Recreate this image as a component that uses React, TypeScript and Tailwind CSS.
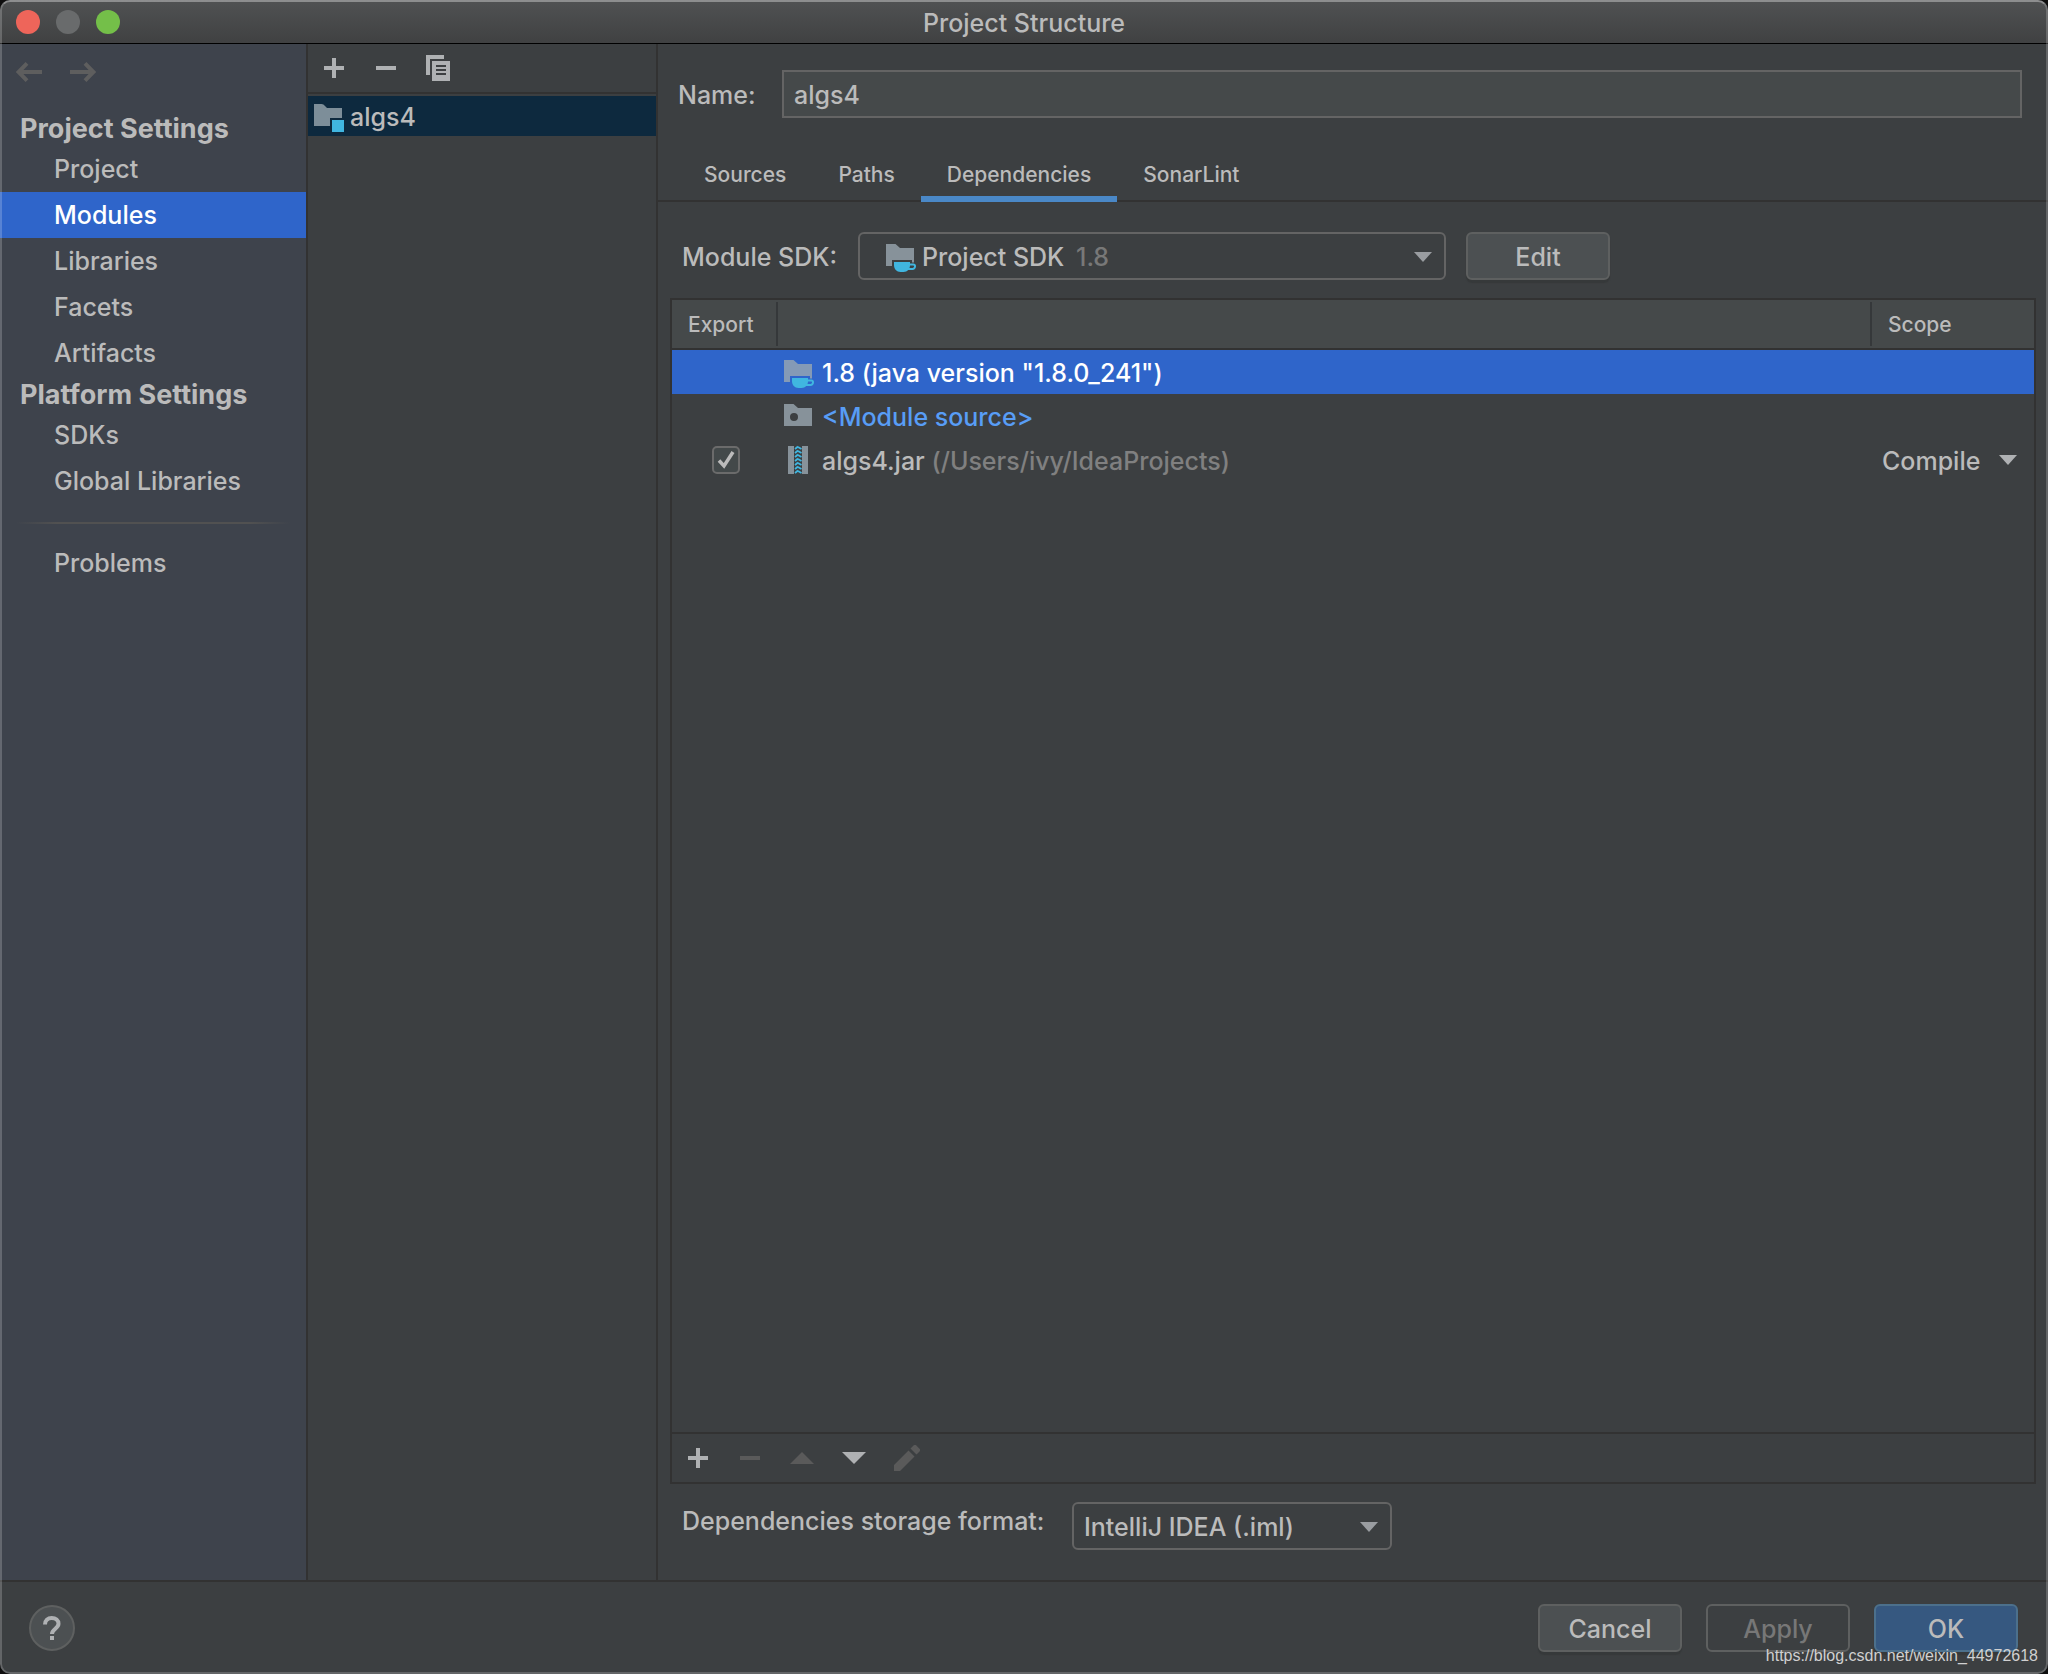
import React from "react";

type IconProps = { className?: string };

function BackIcon() {
  return (
    <svg width="26" height="20" viewBox="0 0 26 20" fill="none" stroke="#5E5E5E" strokeWidth="4">
      <path d="M26 10H3M11 1.4 2.6 10l8.4 8.6" />
    </svg>
  );
}

function ForwardIcon() {
  return (
    <svg width="26" height="20" viewBox="0 0 26 20" fill="none" stroke="#5E5E5E" strokeWidth="4">
      <path d="M0 10h23M15 1.4 23.4 10 15 18.600" />
    </svg>
  );
}

function PlusIcon() {
  return (
    <svg width="20" height="20" viewBox="0 0 20 20" fill="#AFB1B3">
      <path d="M8 0h4v8h8v4h-8v8H8v-8H0V8h8z" />
    </svg>
  );
}

function MinusIcon({ className = "fill-[#AFB1B3]" }: IconProps) {
  return (
    <svg width="20" height="20" viewBox="0 0 20 20" className={className}>
      <path d="M0 8h20v4H0z" />
    </svg>
  );
}

function CopyIcon() {
  return (
    <svg width="24" height="26" viewBox="0 0 24 26">
      <path fill="#AFB1B3" d="M0 0h18v4H4v16H0z" />
      <path fill="#AFB1B3" fillRule="evenodd" d="M6 6h18v20H6zM10 10h10v2H10zM10 14h10v2H10zM10 18h10v2H10z" />
    </svg>
  );
}

function ModuleIcon() {
  return (
    <svg width="32" height="32" viewBox="0 0 32 32">
      <path fill="#9AA7B0" fillOpacity=".8" d="M2 4h7.500c1.500 0 2.500.7 3.500 2l2 2h15v10H18v8H2z" />
      <path fill="#40B6E0" d="M20 20h12v12H20z" />
    </svg>
  );
}

function JdkIcon({ className }: IconProps) {
  return (
    <svg width="32" height="32" viewBox="0 0 32 32" className={className}>
      <path fill="#9AA7B0" fillOpacity=".8" d="M2 4h9.500l4.500 4h14v14.500h-2V20H8v6H2z" />
      <path fill="#40B6E0" d="M10 22h16v3c0 4-2.500 7-6.500 7h-3C12.500 32 10 29 10 25z" />
      <path fill="none" stroke="#40B6E0" strokeWidth="2" d="M25 24.500h4.500a1.500 1.500 0 0 1 1.500 1.500v.5a2.500 2.500 0 0 1-2.500 2.500H23" />
    </svg>
  );
}

function SourceIcon() {
  return (
    <svg width="32" height="32" viewBox="0 0 32 32">
      <path
        fill="#9AA7B0"
        fillOpacity=".8"
        fillRule="evenodd"
        d="M2 4h9.500l4.500 4h14v18H2zM12 13a4 4 0 1 0 0 8 4 4 0 0 0 0-8z"
      />
    </svg>
  );
}

function JarIcon() {
  return (
    <svg width="32" height="32" viewBox="0 0 32 32">
      <path fill="#9AA7B0" fillOpacity=".8" d="M6 2h6v28H6zM20 2h6v28h-6z" />
      <path
        stroke="#40B6E0"
        strokeWidth="1.800"
        fill="none"
        d="M13 5l3-2.500M13 9l3-2.500M13 13l3-2.500M13 17l3-2.500M13 21l3-2.500M13 25l3-2.500M13 29l3-2.500M16 3l3.500 2M16 7l3.500 2M16 11l3.500 2M16 15l3.500 2M16 19l3.500 2M16 23l3.500 2M16 27l3.500 2"
      />
    </svg>
  );
}

function DownArrow({ className }: IconProps) {
  return (
    <svg width="18" height="10" viewBox="0 0 18 10" className={className}>
      <path d="M0 0h18L9 10z" />
    </svg>
  );
}

function MoveIcon({ up = false }: { up?: boolean }) {
  return (
    <svg width="24" height="12" viewBox="0 0 24 12">
      {up ? <path fill="#5A5A5A" d="M0 12h24L12 0z" /> : <path fill="#AFB1B3" d="M0 0h24L12 12z" />}
    </svg>
  );
}

function PencilIcon() {
  return (
    <svg width="26" height="26" viewBox="0 0 26 26" fill="#5A5A5A">
      <path d="M0 20 14.500 5.500l6 6L6 26H0zM16.500 3.500 19.300.7a2.300 2.300 0 0 1 3.300 0l2.700 2.700a2.300 2.300 0 0 1 0 3.300l-2.800 2.800z" />
    </svg>
  );
}

function QuestionIcon() {
  return (
    <svg width="18" height="24" viewBox="0 0 18 24">
      <path
        d="M2 8.500C2 4.500 4.800 2 8.700 2c4 0 6.800 2.400 6.800 5.800 0 4.700-6.500 5.200-6.500 10.200"
        fill="none"
        stroke="#AFB1B3"
        strokeWidth="4"
      />
      <path d="M7 20h4v4H7z" fill="#AFB1B3" />
    </svg>
  );
}

function NavHeading({ children }: { children: React.ReactNode }) {
  return <h2 className="flex h-9 items-center pt-0.5 pl-5 text-[27px] font-bold">{children}</h2>;
}

function NavItem({ label, active = false }: { label: string; active?: boolean }) {
  return (
    <button
      type="button"
      aria-current={active ? "page" : undefined}
      className={
        active
          ? "flex h-[46px] w-full items-center bg-[#2F65CA] pl-[54px] text-white"
          : "flex h-[46px] w-full items-center pl-[54px]"
      }
    >
      {label}
    </button>
  );
}

function Sidebar() {
  return (
    <nav className="w-[308px] shrink-0 border-r-2 border-[#323232] bg-[#3E434C]">
      <div className="flex h-[66px] items-start gap-7 pt-[18px] pl-4">
        <button type="button" aria-label="Back" disabled>
          <BackIcon />
        </button>
        <button type="button" aria-label="Forward" disabled>
          <ForwardIcon />
        </button>
      </div>
      <NavHeading>Project Settings</NavHeading>
      <NavItem label="Project" />
      <NavItem label="Modules" active />
      <NavItem label="Libraries" />
      <NavItem label="Facets" />
      <NavItem label="Artifacts" />
      <NavHeading>Platform Settings</NavHeading>
      <NavItem label="SDKs" />
      <NavItem label="Global Libraries" />
      <div className="mx-4 mt-[18px] mb-4 h-0.5 bg-[linear-gradient(to_right,transparent,#515151_15%,#515151_85%,transparent)]" />
      <NavItem label="Problems" />
    </nav>
  );
}

function ModuleList() {
  return (
    <section className="w-[350px] shrink-0 border-r-2 border-[#323232]">
      <div className="flex h-[50px] items-center gap-8 border-b-2 border-[#323232] px-4">
        <button type="button" aria-label="Add module">
          <PlusIcon />
        </button>
        <button type="button" aria-label="Remove module">
          <MinusIcon />
        </button>
        <button type="button" aria-label="Copy module" className="-ml-0.5">
          <CopyIcon />
        </button>
      </div>
      <button type="button" className="mt-0.5 flex h-10 w-full items-center gap-1.5 bg-[#0D293E] pl-1">
        <ModuleIcon />
        <span className="pt-0.5">algs4</span>
      </button>
    </section>
  );
}

function Tab({ label, active = false }: { label: string; active?: boolean }) {
  return (
    <button
      type="button"
      role="tab"
      aria-selected={active}
      className={
        active
          ? "h-[52px] border-b-[6px] border-[#4A88C7] px-[26px] pt-1"
          : "h-[52px] border-b-[6px] border-transparent px-[26px] pt-1"
      }
    >
      {label}
    </button>
  );
}

function DependencyTable() {
  return (
    <div className="mx-3 mt-[18px] flex grow flex-col border-2 border-[#323232]">
      <div className="grow">
        <table className="w-full table-fixed border-separate border-spacing-0">
          <colgroup>
            <col className="w-[106px]" />
            <col />
            <col className="w-[164px]" />
          </colgroup>
          <thead>
            <tr className="h-[50px] bg-[#45494A] text-left text-[21px]">
              <th className="border-b-2 border-[#323232] p-0 font-medium">
                <div className="flex h-11 items-center border-r-2 border-[#35383A] pt-0.5 pl-4">Export</div>
              </th>
              <th className="border-b-2 border-[#323232] p-0" aria-label="Dependency" />
              <th className="border-b-2 border-[#323232] p-0 font-medium">
                <div className="flex h-11 items-center border-l-2 border-[#35383A] pt-0.5 pl-4">Scope</div>
              </th>
            </tr>
          </thead>
          <tbody>
            <tr className="h-11 bg-[#2F65CA] text-white">
              <td className="p-0" />
              <td className="p-0">
                <div className="flex items-center gap-2 pl-1">
                  <JdkIcon />
                  <span className="pt-0.5">1.8 (java version "1.8.0_241")</span>
                </div>
              </td>
              <td className="p-0" />
            </tr>
            <tr className="h-11 text-[#589DF6]">
              <td className="p-0" />
              <td className="p-0">
                <div className="flex items-center gap-2 pl-1">
                  <SourceIcon />
                  <span className="pt-0.5">&lt;Module source&gt;</span>
                </div>
              </td>
              <td className="p-0" />
            </tr>
            <tr className="h-11">
              <td className="p-0">
                <label className="relative ml-10 block size-7">
                  <input
                    type="checkbox"
                    defaultChecked
                    aria-label="Export algs4.jar"
                    className="peer block size-7 appearance-none rounded-[5px] border-2 border-[#6B6B6B] bg-[#43494A]"
                  />
                  <svg
                    viewBox="0 0 28 28"
                    className="pointer-events-none absolute inset-0 hidden size-7 peer-checked:block"
                  >
                    <path d="M7 14.500 12 20 21 6" fill="none" stroke="#BBBBBB" strokeWidth="3.500" />
                  </svg>
                </label>
              </td>
              <td className="p-0">
                <div className="flex items-center gap-2 pl-1">
                  <JarIcon />
                  <span className="pt-0.5">
                    algs4.jar <span className="text-[#808080]">(/Users/ivy/IdeaProjects)</span>
                  </span>
                </div>
              </td>
              <td className="p-0">
                <div className="relative">
                  <select
                    aria-label="Scope of algs4.jar"
                    defaultValue="Compile"
                    className="block w-full appearance-none bg-transparent pt-0.5 pl-3"
                  >
                    <option>Compile</option>
                  </select>
                  <DownArrow className="pointer-events-none absolute top-1/2 right-[17px] -translate-y-1/2 fill-[#AFB1B3]" />
                </div>
              </td>
            </tr>
          </tbody>
        </table>
      </div>
      <div className="flex h-[50px] items-center gap-8 border-t-2 border-[#323232] pl-4">
        <button type="button" aria-label="Add dependency">
          <PlusIcon />
        </button>
        <button type="button" aria-label="Remove dependency" disabled>
          <MinusIcon className="fill-[#5A5A5A]" />
        </button>
        <button type="button" aria-label="Move up" disabled className="-ml-0.5">
          <MoveIcon up />
        </button>
        <button type="button" aria-label="Move down" className="-ml-1">
          <MoveIcon />
        </button>
        <button type="button" aria-label="Edit dependency" disabled className="-ml-1">
          <PencilIcon />
        </button>
      </div>
    </div>
  );
}

function Editor() {
  return (
    <main className="flex min-w-0 grow flex-col">
      <div className="flex items-center pt-[26px] pr-[26px] pl-5">
        <label htmlFor="module-name" className="w-[104px] pt-0.5">
          Name:
        </label>
        <input
          id="module-name"
          type="text"
          defaultValue="algs4"
          className="h-12 min-w-0 grow border-2 border-[#646464] bg-[#45494A] px-2.5 pt-0.5"
        />
      </div>
      <div role="tablist" className="mt-8 flex h-[52px] border-b-2 border-[#323232] pl-5 text-[21px]">
        <Tab label="Sources" />
        <Tab label="Paths" />
        <Tab label="Dependencies" active />
        <Tab label="SonarLint" />
      </div>
      <div className="mt-[30px] flex items-center pl-6">
        <label htmlFor="module-sdk" className="w-44 pt-0.5">
          Module SDK:
        </label>
        <div className="relative w-[588px]">
          <select
            id="module-sdk"
            defaultValue="Project SDK"
            className="h-12 w-full appearance-none rounded-md border-2 border-[#646464] bg-[#3C3F41] pt-0.5 pl-[62px]"
          >
            <option>Project SDK</option>
          </select>
          <JdkIcon className="pointer-events-none absolute top-2 left-[26px]" />
          <span className="pointer-events-none absolute top-0 left-[218px] pt-0.5 leading-[46px] text-[#787878]">1.8</span>
          <DownArrow className="pointer-events-none absolute top-5 right-3.5 fill-[#9A9DA1]" />
        </div>
        <button
          type="button"
          className="ml-5 h-12 w-36 rounded-md border-2 border-[#5E6060] bg-[#4C5052] pt-0.5 shadow-[0_3px_1px_#36393A]"
        >
          Edit
        </button>
      </div>
      <DependencyTable />
      <div className="mt-[18px] mb-[30px] flex items-start pl-6">
        <label htmlFor="storage-format" className="w-[390px] leading-[38px]">
          Dependencies storage format:
        </label>
        <div className="relative w-80">
          <select
            id="storage-format"
            defaultValue="IntelliJ IDEA (.iml)"
            className="h-12 w-full appearance-none rounded-md border-2 border-[#646464] bg-[#3C3F41] pt-0.5 pl-2.5"
          >
            <option>IntelliJ IDEA (.iml)</option>
          </select>
          <DownArrow className="pointer-events-none absolute top-5 right-3.5 fill-[#9A9DA1]" />
        </div>
      </div>
    </main>
  );
}

export default function App() {
  return (
    <div className="min-h-screen bg-[#0E0E0E] font-['Inter','Liberation_Sans',sans-serif] text-[25px] leading-[30px] font-medium text-[#BBBBBB]">
      <div className="relative flex min-h-screen flex-col overflow-hidden rounded-[10px] bg-[#3C3F41]">
        <header className="grid h-11 grid-cols-[1fr_auto_1fr] items-center border-b border-black bg-linear-to-b from-[#505253] to-[#404142] px-4">
          <div className="flex gap-4">
            <button type="button" aria-label="Close" className="size-6 rounded-full bg-[#EE655A]" />
            <button type="button" aria-label="Minimize" disabled className="size-6 rounded-full bg-[#696B6C]" />
            <button type="button" aria-label="Zoom" className="size-6 rounded-full bg-[#74BF49]" />
          </div>
          <h1 className="pt-0.5">Project Structure</h1>
        </header>
        <div className="flex grow">
          <Sidebar />
          <ModuleList />
          <Editor />
        </div>
        <footer className="flex items-center gap-6 border-t-2 border-[#323232] py-[22px] pr-[30px] pl-[29px]">
          <button
            type="button"
            aria-label="Help"
            className="mr-auto flex size-[46px] items-center justify-center rounded-full border-2 border-[#5E6060] bg-[#4C5052]"
          >
            <QuestionIcon />
          </button>
          <button
            type="button"
            className="h-12 w-36 rounded-md border-2 border-[#5E6060] bg-[#4C5052] pt-0.5 shadow-[0_3px_1px_#36393A]"
          >
            Cancel
          </button>
          <button type="button" disabled className="h-12 w-36 rounded-md border-2 border-[#5E6060] pt-0.5 text-[#777777]">
            Apply
          </button>
          <button
            type="button"
            className="h-12 w-36 rounded-md border-2 border-[#4C708C] bg-[#365880] pt-0.5 shadow-[0_3px_1px_#36393A]"
          >
            OK
          </button>
        </footer>
        <div className="pointer-events-none absolute inset-0 rounded-[10px] border-2 border-white/20 border-t-white/35" />
        <p className="pointer-events-none absolute right-2.5 bottom-2 font-['Liberation_Sans',sans-serif] text-[16px] leading-5 font-normal text-[#D0D0D0]">
          https://blog.csdn.net/weixin_44972618
        </p>
      </div>
    </div>
  );
}
